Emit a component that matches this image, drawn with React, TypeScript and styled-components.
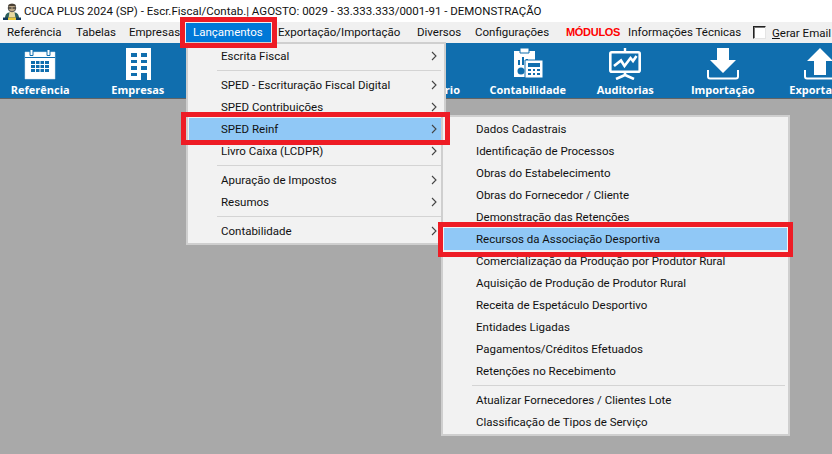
import styled, { createGlobalStyle, css } from "styled-components"

const menuFont = `Roboto, "Noto Sans", sans-serif`

const GlobalStyle = createGlobalStyle`
  html, body {
    margin: 0;
    padding: 0;
    background: #a9a9a9;
  }
`

const Page = styled.div`
  position: relative;
  width: 832px;
  height: 454px;
  overflow: hidden;
  display: flex;
  flex-direction: column;
  background: #a9a9a9;
  font-family: ${menuFont};
  font-size: 11.5px;
  color: #111;
`

const TitleBar = styled.div`
  flex: 0 0 22px;
  display: flex;
  align-items: center;
  gap: 3px;
  padding-left: 3px;
  background: #fff;
  white-space: nowrap;
`

const MenuBar = styled.div`
  flex: 0 0 21px;
  display: flex;
  align-items: center;
  background: #f0f0f0;
  white-space: nowrap;
`

const redFrame = css`
  &::after {
    content: "";
    position: absolute;
    z-index: 5;
    border: 5px solid #ee1c25;
    pointer-events: none;
  }
`

const BarItem = styled.div<{ $width: number; $active?: boolean; $danger?: boolean }>`
  position: relative;
  flex: 0 0 ${(p) => p.$width}px;
  box-sizing: border-box;
  height: 19px;
  line-height: 18px;
  padding-left: 7px;
  ${(p) =>
    p.$danger &&
    css`
      color: #f00;
      font-family: "Liberation Sans", sans-serif;
      font-size: 11px;
      font-weight: 700;
      letter-spacing: -0.3px;
    `}
  ${(p) =>
    p.$active &&
    css`
      background: #0078d7;
      color: #fff;
      ${redFrame}
      &::after {
        inset: -6px;
      }
    `}
`

const CheckBox = styled.span`
  flex: 0 0 auto;
  box-sizing: border-box;
  width: 13px;
  height: 13px;
  margin: 0 6px 0 7px;
  background: #fff;
  border: 1px solid;
  border-color: #222 #e4e4e4 #e4e4e4 #222;
  box-shadow: inset 1px 1px 0 #777;
`

const Shortcut = styled.span`
  text-decoration: underline;
`

const ToolBar = styled.div`
  flex: 0 0 55px;
  display: flex;
  margin-left: -8.5px;
  background: #106eae;
  border-bottom: 1px solid #636363;
`

const ToolButton = styled.div`
  flex: 0 0 97.5px;
  display: flex;
  flex-direction: column;
  align-items: center;
  padding-top: 5px;
  color: #fff;
  font-family: "Open Sans", sans-serif;
  font-size: 11px;
  font-weight: 700;
  white-space: nowrap;

  svg {
    display: block;
    flex: 0 0 32px;
  }
`

const ToolLabel = styled.span`
  margin-top: 2px;
  line-height: 15px;
`

const Desktop = styled.div`
  flex: 1;
  background: #a9a9a9;
`

const Dropdown = styled.div<{ $left: number; $top: number; $width: number }>`
  position: absolute;
  left: ${(p) => p.$left}px;
  top: ${(p) => p.$top}px;
  width: ${(p) => p.$width}px;
  box-sizing: border-box;
  padding: 1px;
  background: #f2f2f2;
  border: 2px solid #cfcfcf;
`

const Row = styled.div<{ $marked?: boolean; $inset?: string }>`
  position: relative;
  height: 22px;
  display: flex;
  align-items: center;
  justify-content: space-between;
  padding: 0 6px 0 32px;
  white-space: nowrap;
  ${(p) =>
    p.$marked &&
    css`
      background: #90c8f6;
      ${redFrame}
      &::after {
        inset: ${p.$inset};
      }
    `}
`

const Divider = styled.div`
  height: 1px;
  margin: 3px 2px 3px 28px;
  background: #d4d4d4;
`

const Arrow = () => (
  <svg width="6" height="10" viewBox="0 0 6 10" fill="none" stroke="#444" strokeWidth="1.1">
    <path d="M1 1l4 4-4 4" />
  </svg>
)

const AppLogo = () => (
  <svg width="18" height="17" viewBox="0 0 18 17">
    <path d="M2 15c0-4 2.5-6 7-6s7 2 7 6v2H2z" fill="#2c5f5c" />
    <path d="M6.5 9h5l1 6h-7z" fill="#e8d9a0" />
    <circle cx="9" cy="5" r="3.8" fill="#bda888" stroke="#333" strokeWidth="0.8" />
    <path d="M5 2.5C6 0 12 0 13 2.5L12 3H6z" fill="#4a4034" />
    <path d="M5.5 5h3M9.5 5h3" stroke="#111" strokeWidth="1.2" />
    <path d="M0 14.5h18V17H0z" fill="#123a5a" />
    <path d="M5 14.5h8V17H5z" fill="#e8c93a" />
  </svg>
)

const CalendarIcon = () => (
  <svg width="32" height="32" viewBox="0 0 32 32">
    <path d="M1 4h30v27H1z" fill="#fff" stroke="#cfe2ef" strokeWidth="0.5" />
    <path d="M1 9.5h30" stroke="#106eae" strokeWidth="1" />
    <path d="M6 1.5h3v6H6zM23 1.5h3v6h-3z" fill="#fff" stroke="#106eae" strokeWidth="1" />
    <path d="M7 13h18v11H7z" fill="#106eae" />
    <path d="M11.5 13v11M16 13v11M20.5 13v11M7 16.5h18M7 20.5h18" stroke="#fff" strokeWidth="1" />
  </svg>
)

const BuildingIcon = () => (
  <svg width="32" height="32" viewBox="0 0 32 32">
    <path d="M4 0h25v32H4z" fill="#fff" />
    <path
      d="M9 5h6v4H9zM19 5h6v4h-6zM9 12h6v3H9zM19 12h6v3h-6zM9 18h6v4H9zM19 18h6v4h-6zM9 25h6v3H9zM19 25h6v7h-6z"
      fill="#106eae"
    />
  </svg>
)

const AccountingIcon = () => (
  <svg width="32" height="32" viewBox="0 0 32 32">
    <path d="M2 3h21v26H2z" fill="#fff" />
    <path d="M8 0h9v5H8z" fill="#fff" stroke="#106eae" strokeWidth="1" />
    <path d="M6 12h2v5H6zM10 9h2v8h-2zM14 11h2v6h-2z" fill="#106eae" />
    <circle cx="9" cy="23" r="3.5" fill="#106eae" />
    <path d="M13 12h18v18H13z" fill="#fff" stroke="#106eae" strokeWidth="1" />
    <path d="M16 15h12v4H16z" fill="#106eae" />
    <path
      d="M16 21h3v2h-3zM21 21h2v2h-2zM25 21h3v2h-3zM16 25h3v2h-3zM21 25h2v2h-2zM25 25h3v2h-3z"
      fill="#106eae"
    />
  </svg>
)

const ChartIcon = () => (
  <svg width="32" height="32" viewBox="0 0 32 32" fill="none" stroke="#fff">
    <path d="M16 0v4" strokeWidth="2.4" />
    <rect x="1.3" y="4.3" width="29.4" height="19.4" rx="1.5" strokeWidth="2.6" />
    <path d="M5 18l7-5.5 3.5 5.5 6-8 2.5 3 3.5-5" strokeWidth="2.6" />
    <path d="M16 24v3M16 27l-9 4M16 27l9 4" strokeWidth="2.6" />
  </svg>
)

const DownloadIcon = () => (
  <svg width="32" height="32" viewBox="0 0 32 32">
    <path d="M10 0h12v12h7L16 25 3 12h7z" fill="#fff" />
    <path d="M1 22v6.5a2 2 0 0 0 2 2h26a2 2 0 0 0 2-2V22" fill="none" stroke="#fff" strokeWidth="2" />
  </svg>
)

const UploadIcon = () => (
  <svg width="32" height="32" viewBox="0 0 32 32">
    <path d="M10 27h12V13h7L16 0 3 13h7z" fill="#fff" />
    <path d="M1 22v6.5a2 2 0 0 0 2 2h26a2 2 0 0 0 2-2V22" fill="none" stroke="#fff" strokeWidth="2" />
  </svg>
)

const App = () => {
  return (
    <>
      <GlobalStyle />
      <Page>
        <TitleBar>
          <AppLogo />
          <span>CUCA PLUS 2024 (SP) - Escr.Fiscal/Contab.| AGOSTO: 0029 - 33.333.333/0001-91 - DEMONSTRAÇÃO</span>
        </TitleBar>
        <MenuBar>
          <BarItem $width={69}>Referência</BarItem>
          <BarItem $width={53}>Tabelas</BarItem>
          <BarItem $width={64}>Empresas</BarItem>
          <BarItem $width={85} $active>
            Lançamentos
          </BarItem>
          <BarItem $width={139}>Exportação/Importação</BarItem>
          <BarItem $width={58}>Diversos</BarItem>
          <BarItem $width={91}>Configurações</BarItem>
          <BarItem $width={62} $danger>
            MÓDULOS
          </BarItem>
          <BarItem $width={125}>Informações Técnicas</BarItem>
          <CheckBox />
          <span>
            <Shortcut>G</Shortcut>erar Email
          </span>
        </MenuBar>
        <ToolBar>
          <ToolButton>
            <CalendarIcon />
            <ToolLabel>Referência</ToolLabel>
          </ToolButton>
          <ToolButton>
            <BuildingIcon />
            <ToolLabel>Empresas</ToolLabel>
          </ToolButton>
          <ToolButton />
          <ToolButton />
          <ToolButton>
            <svg width="32" height="32" />
            <ToolLabel>Calendário</ToolLabel>
          </ToolButton>
          <ToolButton>
            <AccountingIcon />
            <ToolLabel>Contabilidade</ToolLabel>
          </ToolButton>
          <ToolButton>
            <ChartIcon />
            <ToolLabel>Auditorias</ToolLabel>
          </ToolButton>
          <ToolButton>
            <DownloadIcon />
            <ToolLabel>Importação</ToolLabel>
          </ToolButton>
          <ToolButton>
            <UploadIcon />
            <ToolLabel>Exportação</ToolLabel>
          </ToolButton>
        </ToolBar>
        <Desktop />

        <Dropdown $left={186} $top={42} $width={260}>
          <Row>
            Escrita Fiscal
            <Arrow />
          </Row>
          <Divider />
          <Row>
            SPED - Escrituração Fiscal Digital
            <Arrow />
          </Row>
          <Row>
            SPED Contribuições
            <Arrow />
          </Row>
          <Row $marked $inset="-6px -7px -5px -8px">
            SPED Reinf
            <Arrow />
          </Row>
          <Row>
            Livro Caixa (LCDPR)
            <Arrow />
          </Row>
          <Divider />
          <Row>
            Apuração de Impostos
            <Arrow />
          </Row>
          <Row>
            Resumos
            <Arrow />
          </Row>
          <Divider />
          <Row>
            Contabilidade
            <Arrow />
          </Row>
        </Dropdown>

        <Dropdown $left={441} $top={115} $width={349}>
          <Row>Dados Cadastrais</Row>
          <Row>Identificação de Processos</Row>
          <Row>Obras do Estabelecimento</Row>
          <Row>Obras do Fornecedor / Cliente</Row>
          <Row>Demonstração das Retenções</Row>
          <Row $marked $inset="-6px -6px -7px -6px">
            Recursos da Associação Desportiva
          </Row>
          <Row>Comercialização da Produção por Produtor Rural</Row>
          <Row>Aquisição de Produção de Produtor Rural</Row>
          <Row>Receita de Espetáculo Desportivo</Row>
          <Row>Entidades Ligadas</Row>
          <Row>Pagamentos/Créditos Efetuados</Row>
          <Row>Retenções no Recebimento</Row>
          <Divider />
          <Row>Atualizar Fornecedores / Clientes Lote</Row>
          <Row>Classificação de Tipos de Serviço</Row>
        </Dropdown>
      </Page>
    </>
  )
}

export default App
